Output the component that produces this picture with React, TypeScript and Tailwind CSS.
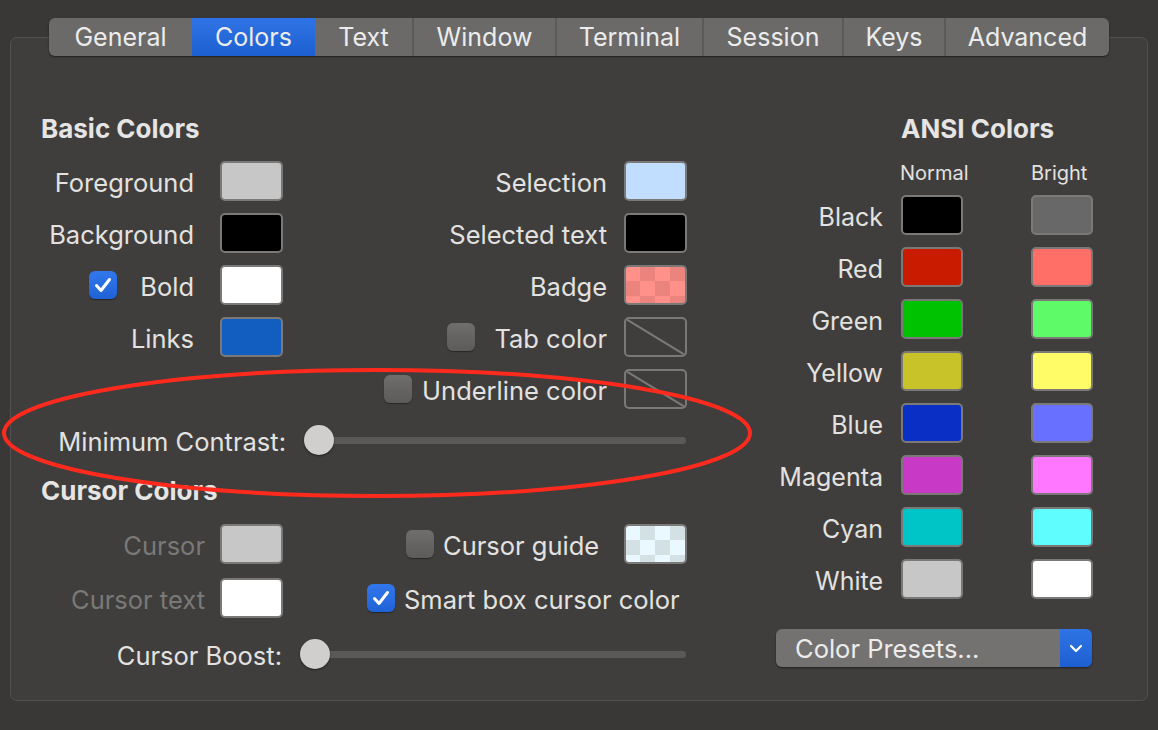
import React from 'react';

const tabs = [
  { name: 'General', w: 'w-[143px]' },
  { name: 'Colors', w: 'w-[123px]', active: true },
  { name: 'Text', w: 'w-[97px]' },
  { name: 'Window', w: 'w-[143px]' },
  { name: 'Terminal', w: 'w-[147px]' },
  { name: 'Session', w: 'w-[140px]' },
  { name: 'Keys', w: 'w-[102px]' },
  { name: 'Advanced', w: 'w-[165px]' },
];

const ansi = [
  { name: 'Black', normal: 'bg-[#000000]', bright: 'bg-[#686868]' },
  { name: 'Red', normal: 'bg-[#c91b00]', bright: 'bg-[#ff6e67]' },
  { name: 'Green', normal: 'bg-[#00c200]', bright: 'bg-[#5ffa68]' },
  { name: 'Yellow', normal: 'bg-[#c7c329]', bright: 'bg-[#fffc67]' },
  { name: 'Blue', normal: 'bg-[#0a2fc4]', bright: 'bg-[#6871ff]' },
  { name: 'Magenta', normal: 'bg-[#c839c5]', bright: 'bg-[#ff77ff]' },
  { name: 'Cyan', normal: 'bg-[#00c5c7]', bright: 'bg-[#60fdff]' },
  { name: 'White', normal: 'bg-[#c7c7c7]', bright: 'bg-[#ffffff]' },
];

const Swatch = ({ className = '' }: { className?: string }) => (
  <div className={`w-[63px] h-[40px] shrink-0 rounded-[5px] border-2 border-[#7a7977] ${className}`} />
);

const EmptySwatch = () => (
  <div className="w-[63px] h-[40px] shrink-0 rounded-[5px] border-2 border-[#7a7977] overflow-hidden">
    <svg width="59" height="36" viewBox="0 0 59 36">
      <line x1="0" y1="0" x2="59" y2="36" stroke="#7a7977" strokeWidth="2" />
    </svg>
  </div>
);

const Checkbox = ({ checked = false }: { checked?: boolean }) =>
  checked ? (
    <div className="w-[28px] h-[28px] shrink-0 rounded-[6px] bg-linear-to-b from-[#3178ec] to-[#1f62d6] flex items-center justify-center shadow-[0_1px_1px_rgba(0,0,0,0.4)]">
      <svg width="18" height="16" viewBox="0 0 18 16">
        <path d="M2.5 8.5l4.5 5L15.5 2.5" fill="none" stroke="#fff" strokeWidth="3" strokeLinecap="round" strokeLinejoin="round" />
      </svg>
    </div>
  ) : (
    <div className="w-[28px] h-[28px] shrink-0 rounded-[6px] bg-linear-to-b from-[#6f6e6c] to-[#5c5b59] shadow-[0_1px_1px_rgba(0,0,0,0.4)]" />
  );

const Slider = ({ w }: { w: string }) => (
  <div className={`relative flex items-center h-[30px] ${w}`}>
    <div className="h-[7px] w-full rounded-full bg-[#5a5957]" />
    <div className="absolute left-0 top-0 w-[30px] h-[30px] rounded-full bg-[#d0cfcd] shadow-[0_1px_2px_rgba(0,0,0,0.5)]" />
  </div>
);

const Row = ({ children }: { children: React.ReactNode }) => (
  <div className="flex items-center h-[40px]">{children}</div>
);

const Label = ({ children, className = '' }: { children: React.ReactNode; className?: string }) => (
  <span className={`pt-[5px] whitespace-nowrap ${className}`}>{children}</span>
);

export default function App() {
  return (
    <div className="relative w-[1158px] h-[730px] overflow-hidden bg-[#393836] pt-[37px] px-[10px] font-['Inter',sans-serif] text-[25.5px] text-[#e3e2e0]">
      <div className="h-[664px] rounded-[7px] border border-[#52514f] bg-[#3f3e3c]">
        {/* tabs */}
        <div className="-mt-[20px] flex justify-center">
          <div className="flex h-[38px] rounded-[6px] overflow-hidden bg-[#6b6a68] text-[25px] shadow-[0_1px_2px_rgba(0,0,0,0.5)]">
            {tabs.map((t, i) => (
              <div
                key={t.name}
                className={`${t.w} flex items-center justify-center pt-[2px] text-[#ececec] ${
                  t.active
                    ? 'bg-linear-to-b from-[#2f74e6] to-[#1d5fd0]'
                    : i > 0 && !tabs[i - 1].active
                    ? 'border-l-2 border-[#5b5a58]'
                    : ''
                }`}
              >
                {t.name}
              </div>
            ))}
          </div>
        </div>

        <div className="flex pl-[30px] pt-[58px]">
          {/* left */}
          <div className="w-[646px] flex flex-col">
            <div className="h-[30px] leading-[30px] text-[26px] font-bold text-[#e6e5e3]">Basic Colors</div>
            <div className="mt-[17px] flex flex-col gap-[12px]">
              <Row>
                <div className="w-[179px] pr-[26px] flex justify-end"><Label>Foreground</Label></div>
                <Swatch className="bg-[#c7c7c7]" />
                <div className="w-[341px] pr-[17px] flex justify-end"><Label>Selection</Label></div>
                <Swatch className="bg-[#c1ddff]" />
              </Row>
              <Row>
                <div className="w-[179px] pr-[26px] flex justify-end"><Label>Background</Label></div>
                <Swatch className="bg-[#000000]" />
                <div className="w-[341px] pr-[17px] flex justify-end"><Label>Selected text</Label></div>
                <Swatch className="bg-[#000000]" />
              </Row>
              <Row>
                <div className="w-[179px] pr-[26px] flex items-center justify-end gap-[23px]">
                  <Checkbox checked />
                  <Label>Bold</Label>
                </div>
                <Swatch className="bg-[#ffffff]" />
                <div className="w-[341px] pr-[17px] flex justify-end"><Label>Badge</Label></div>
                <Swatch className="bg-[image:repeating-conic-gradient(#ec847e_0_25%,#ff918a_0_50%)] bg-[length:30px_30px] bg-[position:-1px_-1px]" />
              </Row>
              <Row>
                <div className="w-[179px] pr-[26px] flex justify-end"><Label>Links</Label></div>
                <Swatch className="bg-[#125dc0]" />
                <div className="w-[341px] pr-[17px] flex items-center justify-end gap-[19px]">
                  <Checkbox />
                  <Label>Tab color</Label>
                </div>
                <EmptySwatch />
              </Row>
              <Row>
                <div className="w-[179px]" />
                <div className="w-[63px]" />
                <div className="w-[341px] pr-[17px] flex items-center justify-end gap-[10px]">
                  <Checkbox />
                  <Label>Underline color</Label>
                </div>
                <EmptySwatch />
              </Row>
            </div>

            <div className="mt-[11px] flex items-center h-[40px]">
              <div className="w-[263px] pr-[18px] flex justify-end"><Label>Minimum Contrast:</Label></div>
              <Slider w="w-[382px]" />
            </div>

            <div className="mt-[16px] h-[30px] leading-[30px] text-[26px] font-bold text-[#e6e5e3]">Cursor Colors</div>

            <div className="mt-[18px] flex flex-col gap-[14px]">
              <Row>
                <div className="w-[179px] pr-[15px] flex justify-end"><Label className="text-[#7a7977]">Cursor</Label></div>
                <Swatch className="bg-[#c7c7c7]" />
                <div className="w-[341px] pl-[123px] flex items-center gap-[9px]">
                  <Checkbox />
                  <Label>Cursor guide</Label>
                </div>
                <Swatch className="bg-[image:repeating-conic-gradient(#d3e0e4_0_25%,#eaf8ff_0_50%)] bg-[length:30px_30px] bg-[position:-1px_-1px]" />
              </Row>
              <Row>
                <div className="w-[179px] pr-[15px] flex justify-end"><Label className="text-[#7a7977]">Cursor text</Label></div>
                <Swatch className="bg-[#ffffff]" />
                <div className="pl-[84px] flex items-center gap-[9px]">
                  <Checkbox checked />
                  <Label>Smart box cursor color</Label>
                </div>
              </Row>
            </div>

            <div className="mt-[16px] flex items-center h-[40px]">
              <div className="w-[259px] pr-[18px] flex justify-end"><Label>Cursor Boost:</Label></div>
              <Slider w="w-[386px]" />
            </div>
          </div>

          {/* ANSI */}
          <div className="ml-[73px] flex flex-col">
            <div className="pl-[141px] h-[30px] leading-[30px] text-[26px] font-bold text-[#e6e5e3] whitespace-nowrap">ANSI Colors</div>
            <div className="mt-[17px] flex h-[24px] items-center text-[20px]">
              <div className="w-[140px]" />
              <div className="w-[131px]">Normal</div>
              <div>Bright</div>
            </div>
            <div className="mt-[10px] flex flex-col gap-[12px] text-[25px]">
              {ansi.map((c) => (
                <div key={c.name} className="flex items-center h-[40px]">
                  <div className="w-[123px] pt-[5px] text-right">{c.name}</div>
                  <div className={`ml-[18px] w-[62px] h-[40px] rounded-[5px] border-2 border-[#7a7977] ${c.normal}`} />
                  <div className={`ml-[68px] w-[62px] h-[40px] rounded-[5px] border-2 border-[#7a7977] ${c.bright}`} />
                </div>
              ))}
            </div>
            <div className="mt-[30px] ml-[16px] w-[316px] h-[38px] flex rounded-[6px] overflow-hidden shadow-[0_1px_2px_rgba(0,0,0,0.5)]">
              <div className="flex-1 bg-[#747270] pl-[19px] pt-[3px] flex items-center text-[#ececec]">Color Presets...</div>
              <div className="w-[32px] bg-linear-to-b from-[#2f74e6] to-[#1d5fd0] flex items-center justify-center">
                <svg width="14" height="9" viewBox="0 0 14 9">
                  <path d="M2 2l5 5 5-5" fill="none" stroke="#fff" strokeWidth="2.2" strokeLinecap="round" strokeLinejoin="round" />
                </svg>
              </div>
            </div>
          </div>
        </div>
      </div>

      {/* red annotation */}
      <svg className="absolute inset-0 pointer-events-none" width="1158" height="730">
        <ellipse cx="377" cy="433" rx="373" ry="63" fill="none" stroke="#ff2a1e" strokeWidth="4" />
      </svg>
    </div>
  );
}
